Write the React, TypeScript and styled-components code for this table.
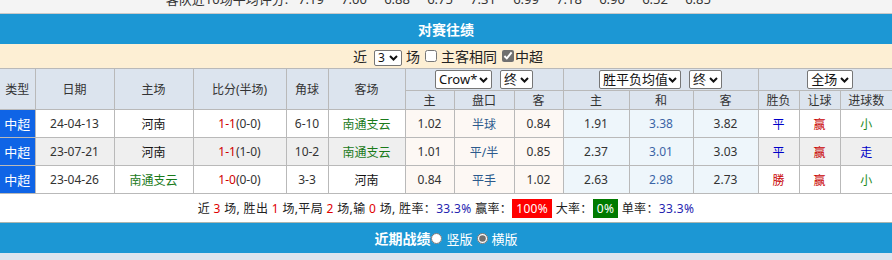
import React from "react";
import styled, { createGlobalStyle } from "styled-components";

const GlobalStyle = createGlobalStyle`
  html, body { margin: 0; padding: 0; background: #fff; }
  body { font-family: "Noto Sans", "Noto Sans CJK SC", sans-serif; font-size: 12px; color: #333; }
  * { box-sizing: border-box; }
`;

const Page = styled.div`
  width: 892px;
  overflow: hidden;
`;

const TopStrip = styled.div`
  height: 14px;
  background: #f4f4f4;
  border-bottom: 1px solid #c9c9c9;
  overflow: hidden;
`;

const TopLine = styled.div`
  display: flex;
  justify-content: center;
  margin-top: -10px;
  padding-left: 2px;
  font-size: 13px;
  line-height: 18px;
  color: #333;
  white-space: nowrap;
`;

const TopLabel = styled.span`
  margin-right: 10px;
`;

const TopValue = styled.span`
  width: 43px;
`;

const BlueBar = styled.div`
  height: 30px;
  background: #1c97d4;
  color: #fff;
  display: flex;
  align-items: center;
  justify-content: center;
  font-size: 14px;
  font-weight: bold;
`;

const FilterRow = styled.div`
  height: 24px;
  background: #fdefd4;
  display: flex;
  align-items: center;
  justify-content: center;
  font-size: 14px;
  color: #222;
  padding-left: 4px;
`;

const Check = styled.input`
  width: 12px;
  height: 12px;
  margin: 0 4px 0 5px;
  accent-color: #6f6f6f;
`;

const SelWrap = styled.span`
  position: relative;
  display: inline-flex;
  vertical-align: middle;
`;

const SelectEl = styled.select<{ $w: number; $h: number; $fs: number }>`
  appearance: none;
  -webkit-appearance: none;
  width: ${(p) => p.$w}px;
  height: ${(p) => p.$h}px;
  border: 1px solid #767676;
  border-radius: 2px;
  background: #fff;
  color: #111;
  font-family: "Noto Sans", "Noto Sans CJK SC", sans-serif;
  font-size: ${(p) => p.$fs}px;
  line-height: ${(p) => p.$h - 2}px;
  padding: 0 0 0 3px;
  margin: 0;
  outline: none;
`;

const ChevronIcon = styled.svg`
  position: absolute;
  right: 4px;
  top: 50%;
  transform: translateY(-50%);
  pointer-events: none;
`;

function Select({ w, h = 19, fs = 13, value }: { w: number; h?: number; fs?: number; value: string }) {
  return (
    <SelWrap>
      <SelectEl $w={w} $h={h} $fs={fs} defaultValue={value}>
        <option value={value}>{value}</option>
      </SelectEl>
      <ChevronIcon width="9" height="6" viewBox="0 0 9 6">
        <path d="M1 1 L4.5 4.5 L8 1" fill="none" stroke="#111" strokeWidth="2" />
      </ChevronIcon>
    </SelWrap>
  );
}

const FilterText = styled.span<{ $ml?: number }>`
  margin-left: ${(p) => p.$ml ?? 0}px;
`;

const Table = styled.table`
  width: 892px;
  border-collapse: collapse;
  table-layout: fixed;
  font-size: 12px;
`;

const HeadCell = styled.th<{ $h?: number; $pl?: number }>`
  background: #dce4ee;
  border: 1px solid #b9b9b9;
  font-weight: normal;
  color: #333;
  height: ${(p) => p.$h ?? 18}px;
  padding: 0 0 0 ${(p) => p.$pl ?? 0}px;
  text-align: center;
  white-space: nowrap;
  &:first-child { border-left: none; }
  &:last-child { border-right: none; }
`;

const SelectGroup = styled.div`
  display: flex;
  justify-content: center;
  gap: 8px;
`;

type Tone = "plain" | "pink" | "blue";

const Row = styled.tr<{ $alt: boolean }>`
  height: 28px;
  background: ${(p) => (p.$alt ? "#efefef" : "#fff")};
`;

const Cell = styled.td<{ $tone?: Tone; $color?: string }>`
  border: 1px solid #b9b9b9;
  text-align: center;
  padding: 0;
  white-space: nowrap;
  color: ${(p) => p.$color ?? "#333"};
  background: ${(p) => (p.$tone === "pink" ? "#fdf8f4" : p.$tone === "blue" ? "#eef6fb" : "transparent")};
  font-size: 12px;
  &:last-child { border-right: none; }
`;

const TypeCell = styled.td`
  background: #0f64e6;
  color: #fff;
  border: 1px solid #b9b9b9;
  border-left: none;
  text-align: center;
  padding: 0;
  font-size: 13px;
`;

const Red = styled.span`
  color: #d00000;
`;

const SummaryRow = styled.div`
  height: 29px;
  border-bottom: 1px solid #aab6b0;
  display: flex;
  align-items: center;
  justify-content: center;
  font-size: 12px;
  letter-spacing: 0.35px;
  color: #222;
  white-space: pre;
`;

const Num = styled.span`
  color: #e00000;
`;

const Pct = styled.span`
  color: #2424b0;
`;

const Badge = styled.span<{ $bg: string }>`
  background: ${(p) => p.$bg};
  color: #fff;
  padding: 2px 4px;
  line-height: 15px;
`;

const BottomBar = styled(BlueBar)`
  font-size: 14px;
  padding-left: 0;
`;

const RadioLabel = styled.span`
  font-weight: normal;
  font-size: 13px;
  margin-left: 2px;
`;

const Radio = styled.input`
  width: 11px;
  height: 11px;
  margin: 0 2px 0 4px;
  accent-color: #6f6f6f;
`;

const NextHeader = styled.div`
  height: 10px;
  background: #dce4ee;
`;

const widths = [35, 79, 79, 93, 42, 77, 49, 60, 49, 66, 64, 65, 41, 41, 52];

const GREEN = "#1a7a1a";
const rows = [
  {
    date: "24-04-13", home: ["河南", "#111"], s: "1-1", h: "(0-0)", corner: "6-10", away: ["南通支云", GREEN],
    o: ["1.02", "半球", "0.84"], e: ["1.91", "3.38", "3.82"],
    r: [["平", "#0000c8"], ["赢", "#c80000"], ["小", "#1a8a1a"]],
  },
  {
    date: "23-07-21", home: ["河南", "#111"], s: "1-1", h: "(1-0)", corner: "10-2", away: ["南通支云", GREEN],
    o: ["1.01", "平/半", "0.85"], e: ["2.37", "3.01", "3.03"],
    r: [["平", "#0000c8"], ["赢", "#c80000"], ["走", "#0000c8"]],
  },
  {
    date: "23-04-26", home: ["南通支云", GREEN], s: "1-0", h: "(0-0)", corner: "3-3", away: ["河南", "#111"],
    o: ["0.84", "平手", "1.02"], e: ["2.63", "2.98", "2.73"],
    r: [["勝", "#c80000"], ["赢", "#c80000"], ["小", "#1a8a1a"]],
  },
];

const topValues = ["7.19", "7.00", "6.88", "6.75", "7.31", "6.99", "7.18", "6.90", "6.52", "6.85"];

export default function App() {
  return (
    <Page>
      <GlobalStyle />
      <TopStrip>
        <TopLine>
          <TopLabel>客队近10场平均评分:</TopLabel>
          {topValues.map((v, i) => (
            <TopValue key={i}>{v}</TopValue>
          ))}
        </TopLine>
      </TopStrip>
      <BlueBar>对赛往绩</BlueBar>
      <FilterRow>
        <span>近</span>
        <FilterText $ml={7}>
          <Select w={28} h={16} fs={12} value="3" />
        </FilterText>
        <FilterText $ml={4}>场</FilterText>
        <Check type="checkbox" />
        <span>主客相同</span>
        <Check type="checkbox" defaultChecked style={{ marginRight: 1 }} />
        <span>中超</span>
      </FilterRow>
      <Table>
        <colgroup>
          {widths.map((w, i) => (
            <col key={i} style={{ width: w }} />
          ))}
        </colgroup>
        <thead>
          <tr>
            <HeadCell rowSpan={2}>类型</HeadCell>
            <HeadCell rowSpan={2}>日期</HeadCell>
            <HeadCell rowSpan={2}>主场</HeadCell>
            <HeadCell rowSpan={2}>比分(半场)</HeadCell>
            <HeadCell rowSpan={2}>角球</HeadCell>
            <HeadCell rowSpan={2}>客场</HeadCell>
            <HeadCell colSpan={3} $h={22}>
              <SelectGroup>
                <Select w={57} value="Crow*" />
                <Select w={33} value="终" />
              </SelectGroup>
            </HeadCell>
            <HeadCell colSpan={3} $h={22}>
              <SelectGroup>
                <Select w={82} value="胜平负均值" />
                <Select w={33} value="终" />
              </SelectGroup>
            </HeadCell>
            <HeadCell colSpan={3} $h={22} $pl={10}>
              <SelectGroup>
                <Select w={46} value="全场" />
              </SelectGroup>
            </HeadCell>
          </tr>
          <tr>
            {["主", "盘口", "客", "主", "和", "客", "胜负", "让球", "进球数"].map((t, i) => (
              <HeadCell key={i} $h={17}>{t}</HeadCell>
            ))}
          </tr>
        </thead>
        <tbody>
          {rows.map((r, i) => (
            <Row key={i} $alt={i === 1}>
              <TypeCell>中超</TypeCell>
              <Cell>{r.date}</Cell>
              <Cell $color={r.home[1]}>{r.home[0]}</Cell>
              <Cell>
                <Red>{r.s}</Red>
                {r.h}
              </Cell>
              <Cell>{r.corner}</Cell>
              <Cell $color={r.away[1]}>{r.away[0]}</Cell>
              <Cell $tone="pink">{r.o[0]}</Cell>
              <Cell $tone="pink" $color="#2c5a8c">{r.o[1]}</Cell>
              <Cell $tone="pink">{r.o[2]}</Cell>
              <Cell $tone="blue">{r.e[0]}</Cell>
              <Cell $tone="blue" $color="#3b64a6">{r.e[1]}</Cell>
              <Cell $tone="blue">{r.e[2]}</Cell>
              {r.r.map(([t, c], j) => (
                <Cell key={j} $color={c}>{t}</Cell>
              ))}
            </Row>
          ))}
        </tbody>
      </Table>
      <SummaryRow>
        近 <Num>3</Num> 场, 胜出 <Num>1</Num> 场,平局 <Num>2</Num> 场,输 <Num>0</Num> 场, 胜率：<Pct>33.3%</Pct> 赢率：<Badge $bg="#ff0000">100%</Badge> 大率：<Badge $bg="#007a00">0%</Badge> 单率：<Pct>33.3%</Pct>
      </SummaryRow>
      <BottomBar>
        近期战绩
        <Radio type="radio" name="ver" style={{ marginLeft: 1 }} />
        <RadioLabel>竖版</RadioLabel>
        <Radio type="radio" name="ver" defaultChecked />
        <RadioLabel>横版</RadioLabel>
      </BottomBar>
      <NextHeader />
    </Page>
  );
}
